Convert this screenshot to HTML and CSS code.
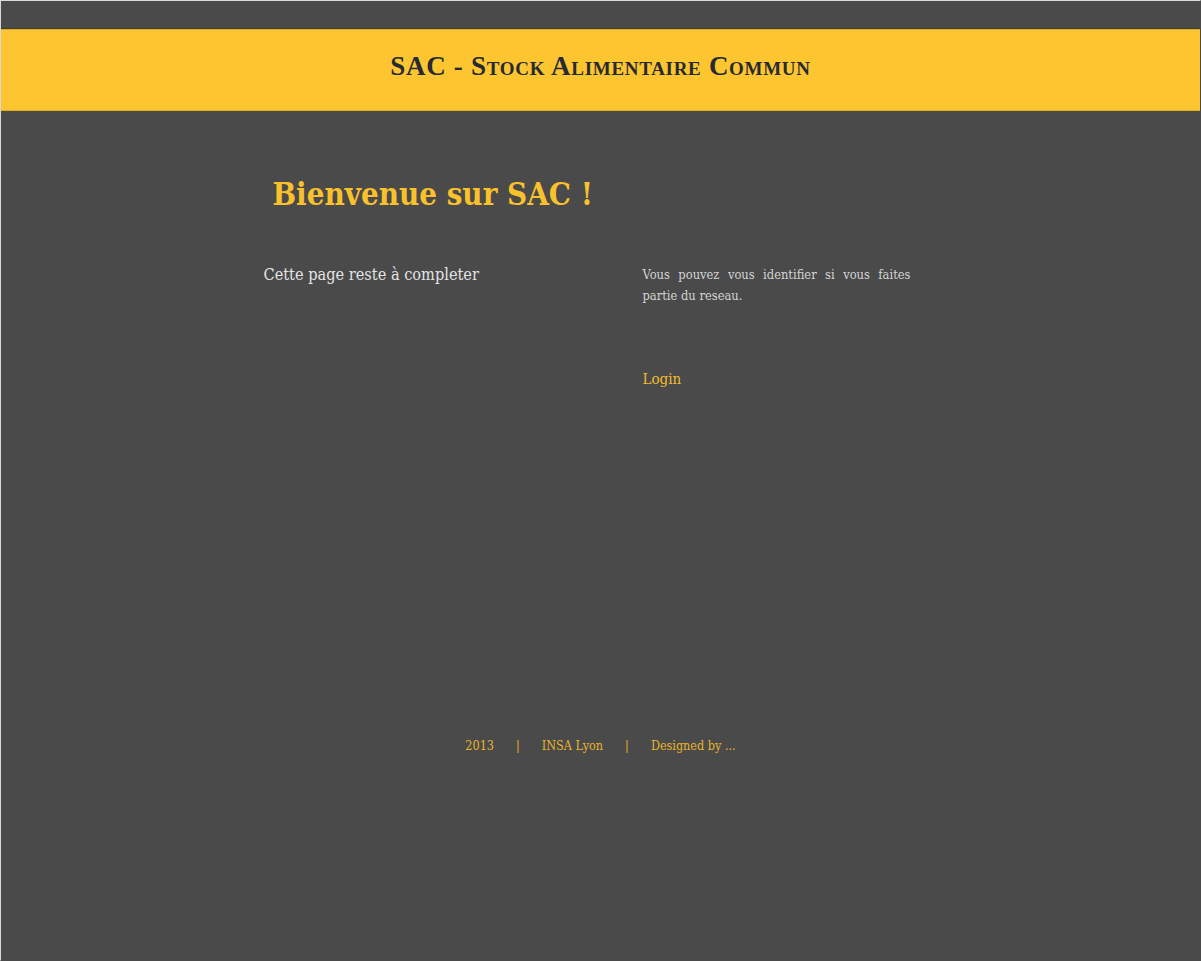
FILE: index.html
```html
<!DOCTYPE html>
<html lang="fr">
<head>
<meta charset="utf-8">
<title>SAC - Stock Alimentaire Commun</title>
<link rel="stylesheet" href="styles.css">
</head>
<body>
<div class="page">
  <div class="topbar"></div>
  <header class="banner">
    <h1 class="site-title">SAC - Stock Alimentaire Commun</h1>
  </header>
  <main class="content">
    <h2 class="welcome">Bienvenue sur SAC !</h2>
    <div class="columns">
      <div class="col-left">
        <p class="lead">Cette page reste à completer</p>
      </div>
      <div class="col-right">
        <p class="info">Vous pouvez vous identifier si vous faites partie du reseau.</p>
        <a class="login" href="#">Login</a>
      </div>
    </div>
  </main>
  <footer class="footer">
    <span>2013</span><span class="sep">|</span><span>INSA Lyon</span><span class="sep">|</span><span>Designed by ...</span>
  </footer>
</div>
</body>
</html>
```

FILE: styles.css
```css
html, body {
  margin: 0;
  padding: 0;
  height: 100%;
}
body {
  background: #4a4a4a;
  font-family: "DejaVu Serif Condensed", "DejaVu Serif", serif;
  font-stretch: condensed;
}
.page {
  min-height: 961px;
  box-sizing: border-box;
  border: 1px solid #d8d8d8;
  border-right-color: #4a4a4a;
  border-bottom-color: #4a4a4a;
  background: #4a4a4a;
}
.topbar {
  height: 27px;
  border-bottom: 1px solid #3c3c3c;
}
.banner {
  height: 80px;
  background: #fdc52f;
  border-top: 1px solid #e3ad1f;
  border-bottom: 1px solid #e3ad1f;
  display: flex;
  align-items: center;
  justify-content: center;
}
.site-title {
  margin: 0;
  font-family: "Liberation Serif", serif;
  font-stretch: normal;
  font-variant: small-caps;
  font-weight: bold;
  font-size: 27px;
  letter-spacing: 0.7px;
  color: #262a33;
  position: relative;
  top: -4px;
}
.content {
  width: 674px;
  margin: 0 auto;
}
.welcome {
  margin: 63px 0 0 9px;
  font-size: 31px;
  font-weight: bold;
  color: #f9c12c;
  line-height: 40px;
}
.columns {
  display: grid;
  grid-template-columns: 379px 268px;
  margin-top: 50px;
}
.lead {
  margin: 0;
  font-size: 16.2px;
  color: #e4e4e4;
  line-height: 21px;
}
.info {
  margin: 0;
  font-size: 12.8px;
  color: #d4d4d4;
  line-height: 21px;
  text-align: justify;
}
.login {
  display: inline-block;
  margin-top: 64px;
  font-size: 15px;
  color: #f2bc2e;
  text-decoration: none;
}
.footer {
  margin-top: 350px;
  display: flex;
  justify-content: center;
  gap: 22px;
  font-size: 12.5px;
  color: #e8b42a;
}
```
